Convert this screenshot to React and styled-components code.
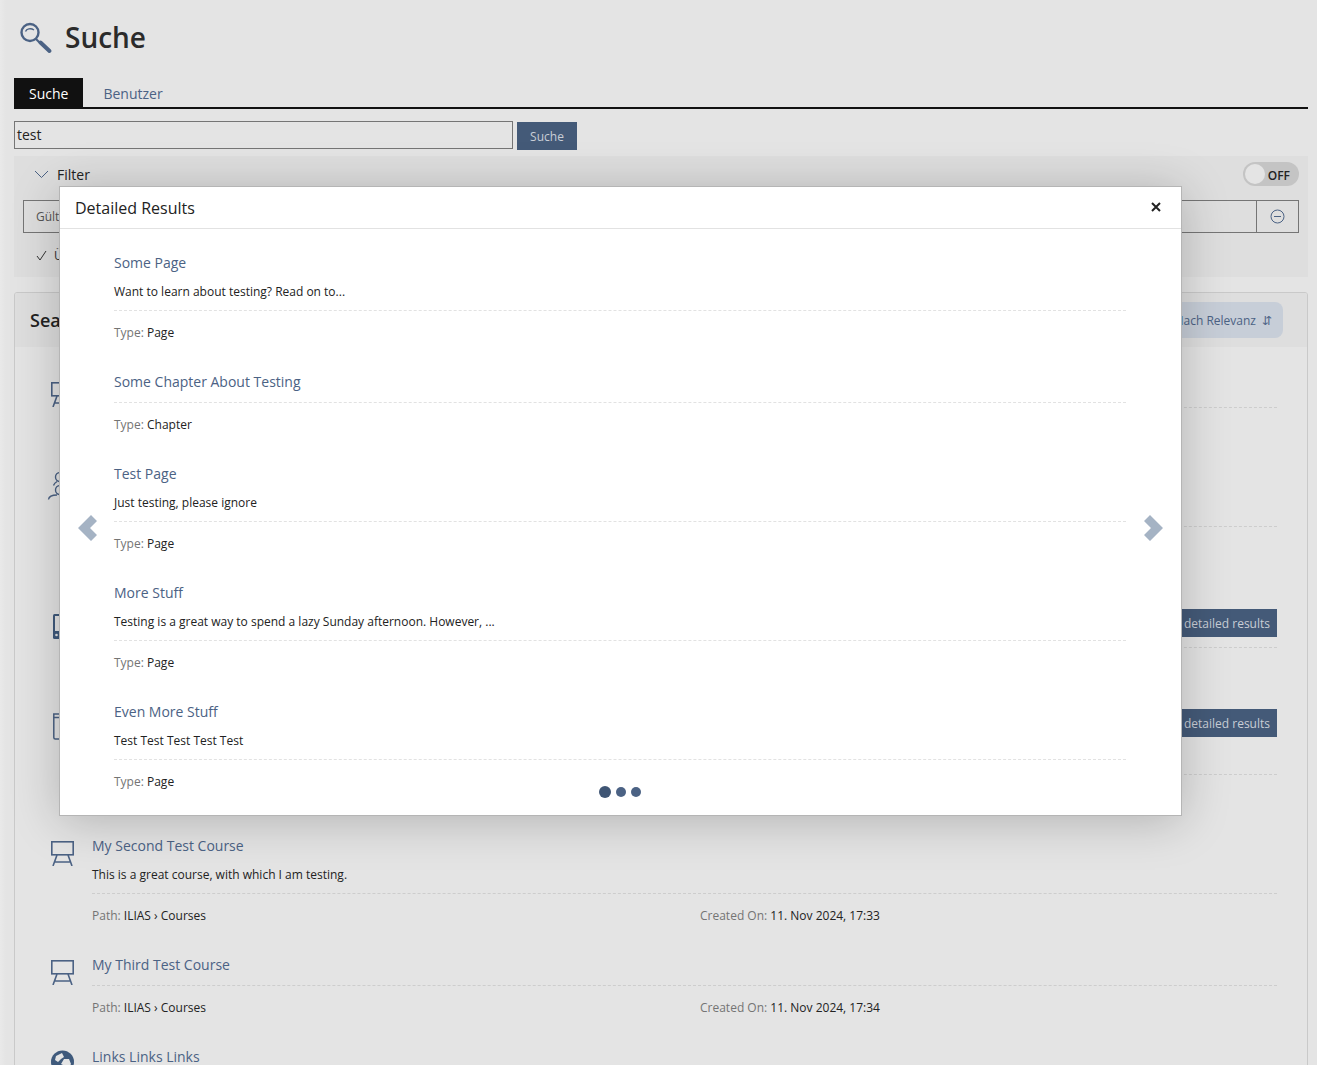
import React from 'react';
import styled, { createGlobalStyle } from 'styled-components';

const Global = createGlobalStyle`
  html, body { margin: 0; padding: 0; height: 100%; overflow: hidden; background: #e4e4e4; }
  * { box-sizing: border-box; }
  body { font-family: "Open Sans", "Noto Sans", sans-serif; font-size: 12px; color: #161616; }
`;

const Page = styled.div`
  position: relative; height: 1065px; overflow: hidden; padding: 0 9px 0 14px;
  background: linear-gradient(to right, #e9e9e9 0, #e4e4e4 6px);
`;
const Header = styled.header`
  display: flex; align-items: center; gap: 12px; height: 78px; padding: 0 0 5px 5px;
`;
const Title = styled.h1`
  margin: 0; font-size: 28px; font-weight: 600; color: #2b2b2b; line-height: 36px;
`;
const Tabs = styled.nav`
  display: flex; height: 31px; border-bottom: 2px solid #111;
`;
const Tab = styled.a`
  display: flex; align-items: center; justify-content: center; height: 29px; padding: 2px 15px 0; margin-right: ${p => p.$active ? '5px' : '0'};
  font-size: 14px; color: ${p => p.$active ? '#fff' : '#4b6284'}; background: ${p => p.$active ? '#111' : 'transparent'};
`;
const SearchRow = styled.div`
  display: flex; gap: 4px; margin-top: 12px; align-items: flex-start;
`;
const SearchInput = styled.div`
  width: 499px; height: 28px; border: 1px solid #757575; font-size: 14px; line-height: 26px; padding-left: 2px; color: #222;
`;
const SearchBtn = styled.button`
  width: 60px; height: 28px; margin-top: 1px; border: 0; background: #445a78; color: #c9ced6; font: 12px "Open Sans", sans-serif;
`;
const FilterPanel = styled.section`
  margin-top: 6px; height: 121px; background: #dedede; padding: 6px 9px 0;
`;
const FilterTop = styled.div`
  display: flex; align-items: center; justify-content: space-between; height: 26px; padding-left: 11px;
`;
const FilterLabel = styled.div`
  display: flex; align-items: center; gap: 8px; font-size: 14px; color: #222; margin-top: -2px;
`;
const Toggle = styled.div`
  display: flex; align-items: center; justify-content: space-between; width: 56px; height: 24px; border-radius: 12px; background: #c4c4c4; padding: 2px 9px 0 2px; margin-top: -2px;
  font-size: 12px; font-weight: 600; color: #222;
`;
const Knob = styled.span`
  width: 20px; height: 20px; border-radius: 50%; background: #e4e4e4; margin-top: -2px;
`;
const FilterInput = styled.div`
  display: flex; height: 33px; margin-top: 12px; border: 1px solid #757575; font-size: 12px; color: #555;
`;
const FilterName = styled.div`
  width: 80px; padding: 0 12px; line-height: 31px; border-right: 1px solid #757575; white-space: nowrap; overflow: hidden;
`;
const FilterValue = styled.div`flex: 1;`;
const FilterEnd = styled.div`
  width: 42px; display: flex; align-items: center; justify-content: center; border-left: 1px solid #757575;
`;
const Applied = styled.div`
  display: flex; align-items: center; gap: 7px; margin-top: 14px; padding-left: 13px; font-size: 12px; color: #333;
`;
const Results = styled.section`
  margin-top: 15px; border: 1px solid #c9c9c9; border-radius: 3px 3px 0 0; height: 800px; overflow: hidden;
`;
const ResultsHead = styled.div`
  display: flex; align-items: center; justify-content: space-between; height: 54px; background: #dedede; padding: 0 24px 0 15px;
`;
const ResultsTitle = styled.h2`
  margin: 0; font-size: 18px; font-weight: 600; color: #222;
`;
const Sort = styled.div`
  display: flex; align-items: center; gap: 6px; height: 36px; padding: 0 11px; border-radius: 8px; background: #c7ced8; color: #4b6284; font-size: 12px;
`;
const List = styled.div`padding-top: 30px;`;
const Item = styled.article`
  display: flex; padding: 0 30px 0 33px; margin-bottom: ${p => p.$gap ?? 29}px;
`;
const IconCell = styled.div`
  width: 44px; flex: none; padding: 4px 0 0 2px;
`;
const Body = styled.div`flex: 1; min-width: 0;`;
const TitleRow = styled.div`
  display: flex; justify-content: space-between; align-items: center; min-height: 20px;
`;
const LinkTitle = styled.a`
  font-size: 14px; line-height: 20px; color: #4b6284; display: block;
`;
const Detail = styled.button`
  height: 28px; width: 107px; border: 0; background: #445a78; color: #c9ced6; font: 12px "Open Sans", sans-serif; text-align: right; padding-right: 7px;
`;
const Desc = styled.p`
  margin: 0; padding-top: 10px; font-size: 12px; line-height: 18px; color: #222; height: 27px;
`;
const Meta = styled.div`
  margin-top: 10px; border-top: 1px dashed ${p => p.$light ? '#e2e2e2' : '#cdcdcd'}; padding-top: 12px; min-height: ${p => p.$rows ? p.$rows * 20 + 13 : 33}px;
  display: grid; grid-template-columns: 608px 1fr; font-size: 12px; line-height: 20px; color: #222;
`;
const MetaLabel = styled.span`color: #747474;`;

const Modal = styled.div`
  position: absolute; left: 59px; top: 186px; width: 1123px; height: 630px; background: #fff; border: 1px solid #b5b5b5;
  box-shadow: 0 5px 45px rgba(0,0,0,.22); display: flex; flex-direction: column; overflow: hidden;
`;
const ModalHead = styled.div`
  flex: none; display: flex; align-items: center; justify-content: space-between; height: 42px; border-bottom: 1px solid #e2e2e2; padding: 0 20px 0 15px;
`;
const ModalTitle = styled.h3`margin: 0; font-size: 16px; font-weight: 400; color: #222;`;
const Close = styled.span`display: flex; margin-top: -2px;`;
const ModalBody = styled.div`
  position: relative; flex: 1; padding: 24px 55px 0 54px;
`;
const Slide = styled.div`margin-bottom: ${p => p.$gap}px;`;
const SlideMeta = styled(Meta)`display: block;`;
const Arrow = styled.span`
  position: absolute; top: 284px; ${p => p.$right ? 'right: 17px' : 'left: 17px'};
`;
const Dots = styled.div`
  position: absolute; left: 539px; bottom: 17px; display: flex; align-items: center; gap: 5px;
`;
const Dot = styled.span`
  width: ${p => p.$on ? 12 : 10}px; height: ${p => p.$on ? 12 : 10}px; border-radius: 50%; background: ${p => p.$on ? '#3f5574' : '#4b6284'};
`;

const C = '#4b6284';
const Easel = () => (
  <svg width="25" height="26" viewBox="0 0 25 26" fill="none" stroke={C} strokeWidth="1.6">
    <rect x="1.8" y="1.8" width="21.4" height="13" />
    <path d="M7 15l-4 11M18 15l4 11M5 22h15" />
  </svg>
);
const Group = () => (
  <svg width="25" height="31" viewBox="0 0 25 31" fill="none" stroke={C} strokeWidth="1.4" style={{ margin: '-3px 0 0 -3px' }}>
    <circle cx="13" cy="7" r="4.500" />
    <path d="M10 11.500c-1.500 1-3 2-3.500 4M16 11.500c2 1 4 2 4.500 4" />
    <circle cx="13" cy="20" r="4.500" />
    <path d="M10 25c-4 0-8 1-8.500 4.500M16 25c4 0 8 1 8.500 4.500" />
  </svg>
);
const Tablet = () => (
  <svg width="25" height="26" viewBox="0 0 25 26" style={{ marginTop: 1 }}>
    <rect x="3" y="0" width="20" height="25" rx="1.500" fill="#3f5a7c" />
    <rect x="5" y="2" width="16" height="15" fill="#e4e4e4" />
    <circle cx="6.500" cy="21" r="1.300" fill="#e4e4e4" />
  </svg>
);
const Jar = () => (
  <svg width="25" height="27" viewBox="0 0 25 27" fill="none" stroke={C} strokeWidth="1.500">
    <path d="M3.800 1h18v23.500a1.500 1.500 0 0 1-1.500 1.500H5.300a1.500 1.500 0 0 1-1.500-1.500z" />
    <path d="M3.800 4.500h18M10 8.500h2M10 11h2" />
  </svg>
);
const Globe = () => (
  <svg width="25" height="25" viewBox="0 0 25 25" style={{ marginTop: -1 }}>
    <circle cx="12.500" cy="12" r="11.500" fill="#3f5a7c" />
    <path d="M6 6l6-3 2 4-3 2-3 3-3-2zM14 9l5 0 2 5-3 5-3-3-4-2z" fill="#e4e4e4" />
  </svg>
);

const Slides = [
  { t: 'Some Page', d: 'Want to learn about testing? Read on to...', m: 'Page', gap: 29 },
  { t: 'Some Chapter About Testing', m: 'Chapter', gap: 29 },
  { t: 'Test Page', d: 'Just testing, please ignore', m: 'Page', gap: 29 },
  { t: 'More Stuff', d: 'Testing is a great way to spend a lazy Sunday afternoon. However, ...', m: 'Page', gap: 29 },
  { t: 'Even More Stuff', d: 'Test Test Test Test Test', m: 'Page', gap: 0 },
];

export default function App() {
  return (
    <Page>
      <Global />
      <Header>
        <svg width="34" height="34" viewBox="0 0 34 34" fill="none">
          <circle cx="11" cy="12.500" r="8.500" stroke="#4b6284" strokeWidth="2.400" />
          <path d="M6.500 11.500c1-2.500 5-4 8.500-1.500" stroke="#4b6284" strokeWidth="1.400" />
          <path d="M17 19l4 4" stroke="#4b6284" strokeWidth="2.200" />
          <path d="M21.500 22.500l9 8.500" stroke="#4b6284" strokeWidth="4" strokeLinecap="round" />
        </svg>
        <Title>Suche</Title>
      </Header>
      <Tabs>
        <Tab $active>Suche</Tab>
        <Tab>Benutzer</Tab>
      </Tabs>
      <SearchRow>
        <SearchInput>test</SearchInput>
        <SearchBtn>Suche</SearchBtn>
      </SearchRow>
      <FilterPanel>
        <FilterTop>
          <FilterLabel>
            <svg width="15" height="9" viewBox="0 0 15 9" fill="none" stroke="#4b6284"><path d="M1 1l6.500 6.500L14 1" /></svg>
            Filter
          </FilterLabel>
          <Toggle><Knob />OFF</Toggle>
        </FilterTop>
        <FilterInput>
          <FilterName>Gült</FilterName>
          <FilterValue />
          <FilterEnd>
            <svg width="15" height="15" viewBox="0 0 15 15" fill="none" stroke="#4b6284"><circle cx="7.500" cy="7.500" r="6.500" /><path d="M4 7.500h7" /></svg>
          </FilterEnd>
        </FilterInput>
        <Applied>
          <svg width="11" height="11" viewBox="0 0 11 11" fill="none" stroke="#333"><path d="M1 6l3 4 6-9" /></svg>
          Ü
        </Applied>
      </FilterPanel>
      <Results>
        <ResultsHead>
          <ResultsTitle>Sea</ResultsTitle>
          <Sort>Nach Relevanz <span>⇵</span></Sort>
        </ResultsHead>
        <List>
          <Item>
            <IconCell><Easel /></IconCell>
            <Body>
              <TitleRow />
              <Meta />
            </Body>
          </Item>
          <Item $gap={30}>
            <IconCell><Group /></IconCell>
            <Body>
              <TitleRow />
              <Desc />
              <Meta $rows={2} />
            </Body>
          </Item>
          <Item>
            <IconCell><Tablet /></IconCell>
            <Body>
              <TitleRow><span /><Detail>detailed results</Detail></TitleRow>
              <Meta />
            </Body>
          </Item>
          <Item>
            <IconCell><Jar /></IconCell>
            <Body>
              <TitleRow><span /><Detail>detailed results</Detail></TitleRow>
              <Desc />
              <Meta />
            </Body>
          </Item>
          <Item>
            <IconCell><Easel /></IconCell>
            <Body>
              <TitleRow><LinkTitle>My Second Test Course</LinkTitle></TitleRow>
              <Desc>This is a great course, with which I am testing.</Desc>
              <Meta><div><MetaLabel>Path:</MetaLabel> ILIAS › Courses</div><div><MetaLabel>Created On:</MetaLabel> 11. Nov 2024, 17:33</div></Meta>
            </Body>
          </Item>
          <Item>
            <IconCell><Easel /></IconCell>
            <Body>
              <TitleRow><LinkTitle>My Third Test Course</LinkTitle></TitleRow>
              <Meta><div><MetaLabel>Path:</MetaLabel> ILIAS › Courses</div><div><MetaLabel>Created On:</MetaLabel> 11. Nov 2024, 17:34</div></Meta>
            </Body>
          </Item>
          <Item>
            <IconCell><Globe /></IconCell>
            <Body>
              <TitleRow><LinkTitle>Links Links Links</LinkTitle></TitleRow>
            </Body>
          </Item>
        </List>
      </Results>
      <Modal>
        <ModalHead>
          <ModalTitle>Detailed Results</ModalTitle>
          <Close>
            <svg width="10" height="10" viewBox="0 0 10 10" stroke="#222" strokeWidth="2"><path d="M1 1l8 8M9 1l-8 8" /></svg>
          </Close>
        </ModalHead>
        <ModalBody>
          {Slides.map(s => (
            <Slide key={s.t} $gap={s.gap}>
              <LinkTitle>{s.t}</LinkTitle>
              {s.d && <Desc>{s.d}</Desc>}
              <SlideMeta $light><MetaLabel>Type:</MetaLabel> {s.m}</SlideMeta>
            </Slide>
          ))}
          <Arrow>
            <svg width="22" height="30" viewBox="0 0 22 30"><path d="M14 2l6 6-7 7 7 7-6 6L1 15z" fill="#a5b3c4" /></svg>
          </Arrow>
          <Arrow $right>
            <svg width="22" height="30" viewBox="0 0 22 30"><path d="M8 2L2 8l7 7-7 7 6 6 13-13z" fill="#a5b3c4" /></svg>
          </Arrow>
          <Dots><Dot $on /><Dot /><Dot /></Dots>
        </ModalBody>
      </Modal>
    </Page>
  );
}
